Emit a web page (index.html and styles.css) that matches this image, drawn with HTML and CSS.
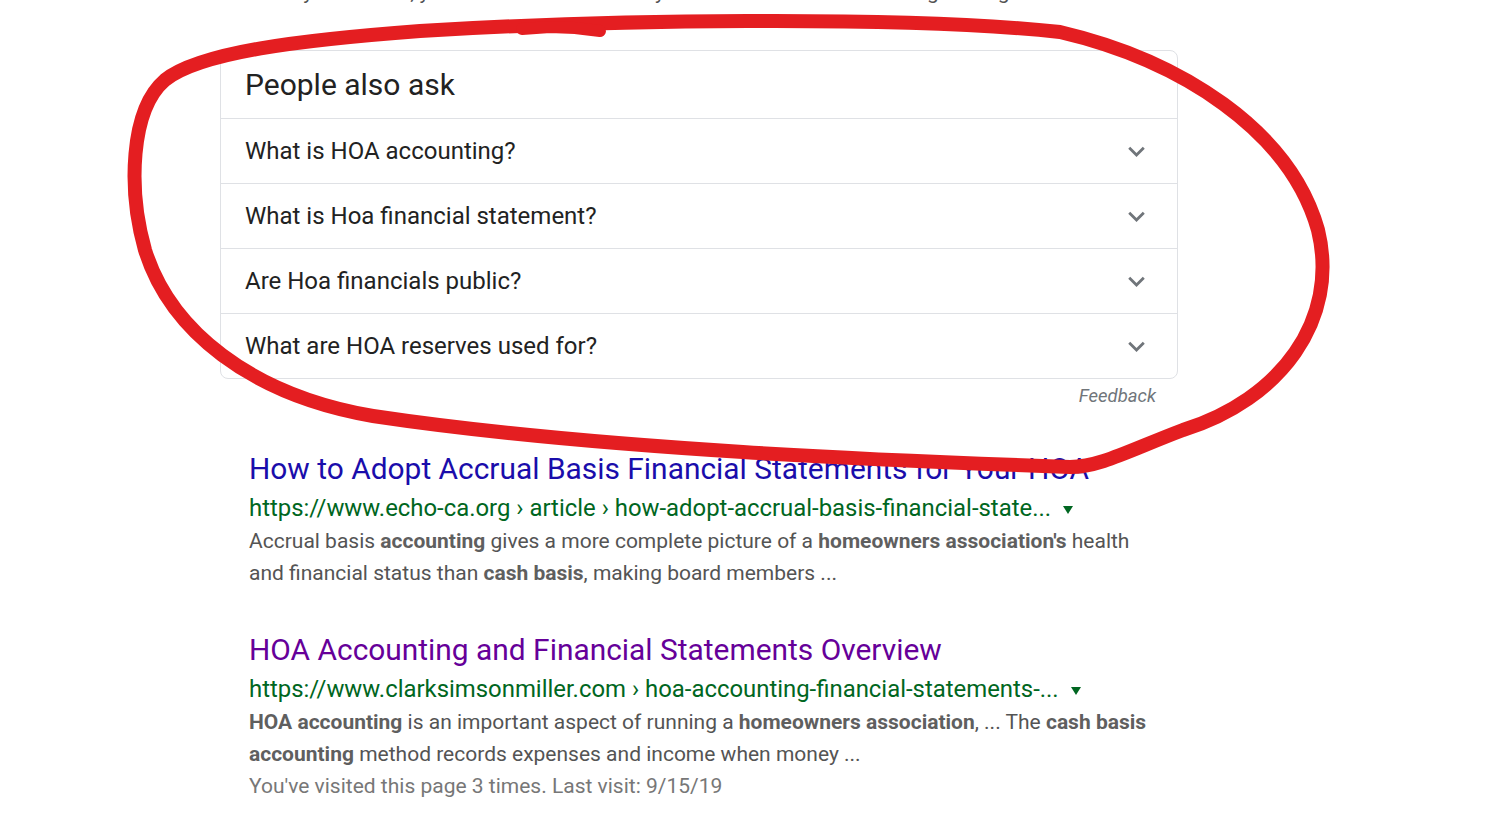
FILE: index.html
```html
<!DOCTYPE html>
<html lang="en">
<head>
<meta charset="utf-8">
<title>People also ask</title>
<link rel="stylesheet" href="styles.css">
</head>
<body>
<div class="page">
  <div class="cut">Mostly the books, your board can track every dollar as it moves and the right things</div>

  <div class="paa">
    <div class="paa-head">People also ask</div>
    <div class="paa-row"><span>What is HOA accounting?</span><svg class="chev" viewBox="0 0 24 24"><path d="M16.59 8.59L12 13.17 7.41 8.59 6 10l6 6 6-6z"/></svg></div>
    <div class="paa-row"><span>What is Hoa financial statement?</span><svg class="chev" viewBox="0 0 24 24"><path d="M16.59 8.59L12 13.17 7.41 8.59 6 10l6 6 6-6z"/></svg></div>
    <div class="paa-row"><span>Are Hoa financials public?</span><svg class="chev" viewBox="0 0 24 24"><path d="M16.59 8.59L12 13.17 7.41 8.59 6 10l6 6 6-6z"/></svg></div>
    <div class="paa-row"><span>What are HOA reserves used for?</span><svg class="chev" viewBox="0 0 24 24"><path d="M16.59 8.59L12 13.17 7.41 8.59 6 10l6 6 6-6z"/></svg></div>
  </div>
  <div class="feedback">Feedback</div>

  <div class="result">
    <a class="title" href="#">How to Adopt Accrual Basis Financial Statements for Your HOA</a>
    <div class="url">https://www.echo-ca.org › article › how-adopt-accrual-basis-financial-state... <span class="tri"></span></div>
    <div class="snippet">Accrual basis <b>accounting</b> gives a more complete picture of a <b>homeowners association's</b> health and financial status than <b>cash basis</b>, making board members ...</div>
  </div>

  <div class="result">
    <a class="title visited" href="#">HOA Accounting and Financial Statements Overview</a>
    <div class="url">https://www.clarksimsonmiller.com › hoa-accounting-financial-statements-... <span class="tri"></span></div>
    <div class="snippet"><b>HOA accounting</b> is an important aspect of running a <b>homeowners association</b>, ... The <b>cash basis accounting</b> method records expenses and income when money ...</div>
    <div class="visit">You've visited this page 3 times. Last visit: 9/15/19</div>
  </div>
</div>

<svg class="marker" width="1485" height="829" viewBox="0 0 1485 829">
  <path d="M420 31 C600 20, 900 15, 1060 32 C1180 60, 1290 130, 1318 230 C1340 320, 1280 400, 1183 430 C1130 450, 1100 467, 1070 467 C900 461, 600 450, 373 416 C250 395, 170 330, 145 250 C128 190, 130 110, 165 80 C200 52, 300 40, 420 31 Z" fill="none" stroke="#e41e21" stroke-width="14" stroke-linejoin="round"/>
  <polyline points="522,29 550,27 575,28 600,31" fill="none" stroke="#e41e21" stroke-width="12" stroke-linejoin="round" stroke-linecap="round"/>
</svg>
</body>
</html>
```

FILE: styles.css
```css
html, body {
  margin: 0;
  padding: 0;
  background: #fff;
  overflow: hidden;
}

body {
  font-family: Roboto, "Noto Sans", Arial, sans-serif;
  color: #222;
}

.page {
  padding-left: 220px;
  width: 958px;
}

.cut {
  margin-top: -24px;
  padding-left: 30px;
  font-size: 21px;
  line-height: 32px;
  color: #545454;
  white-space: nowrap;
}

.paa {
  margin-top: 42px;
  width: 958px;
  box-sizing: border-box;
  border: 1px solid #dfe1e5;
  border-radius: 8px;
}

.paa-head {
  height: 67px;
  display: flex;
  align-items: center;
  padding-left: 24px;
  font-size: 30px;
  color: #222;
  border-bottom: 1px solid #dfe1e5;
}

.paa-row {
  height: 64px;
  display: flex;
  align-items: center;
  justify-content: space-between;
  padding-left: 24px;
  padding-right: 24px;
  font-size: 24px;
  color: #222;
  border-bottom: 1px solid #dfe1e5;
}

.paa-row:last-child {
  border-bottom: none;
}

.chev {
  width: 33px;
  height: 33px;
  fill: #70757a;
}

.feedback {
  padding-top: 5px;
  padding-right: 22px;
  text-align: right;
  font-size: 18.5px;
  line-height: 24px;
  font-style: italic;
  color: #70757a;
}

.result {
  padding-left: 29px;
  margin-top: 43px;
}

.title {
  display: block;
  font-size: 29.9px;
  line-height: 36px;
  color: #1a0dab;
  text-decoration: none;
  white-space: nowrap;
  margin-bottom: 5px;
}

.title.visited {
  color: #660099;
}

.url {
  font-size: 23.9px;
  line-height: 32px;
  color: #006621;
  white-space: nowrap;
}

.tri {
  display: inline-block;
  margin-left: 6px;
  vertical-align: middle;
  width: 0;
  height: 0;
  border-left: 5px solid transparent;
  border-right: 5px solid transparent;
  border-top: 8px solid #006621;
}

.snippet {
  margin-top: 1px;
  font-size: 21px;
  line-height: 32px;
  color: #545454;
  width: 905px;
}

.snippet b {
  color: #5f5f5f;
  font-weight: bold;
}

.visit {
  font-size: 21px;
  line-height: 32px;
  color: #777;
}

.marker {
  position: absolute;
  top: 0;
  left: 0;
  pointer-events: none;
}
```
